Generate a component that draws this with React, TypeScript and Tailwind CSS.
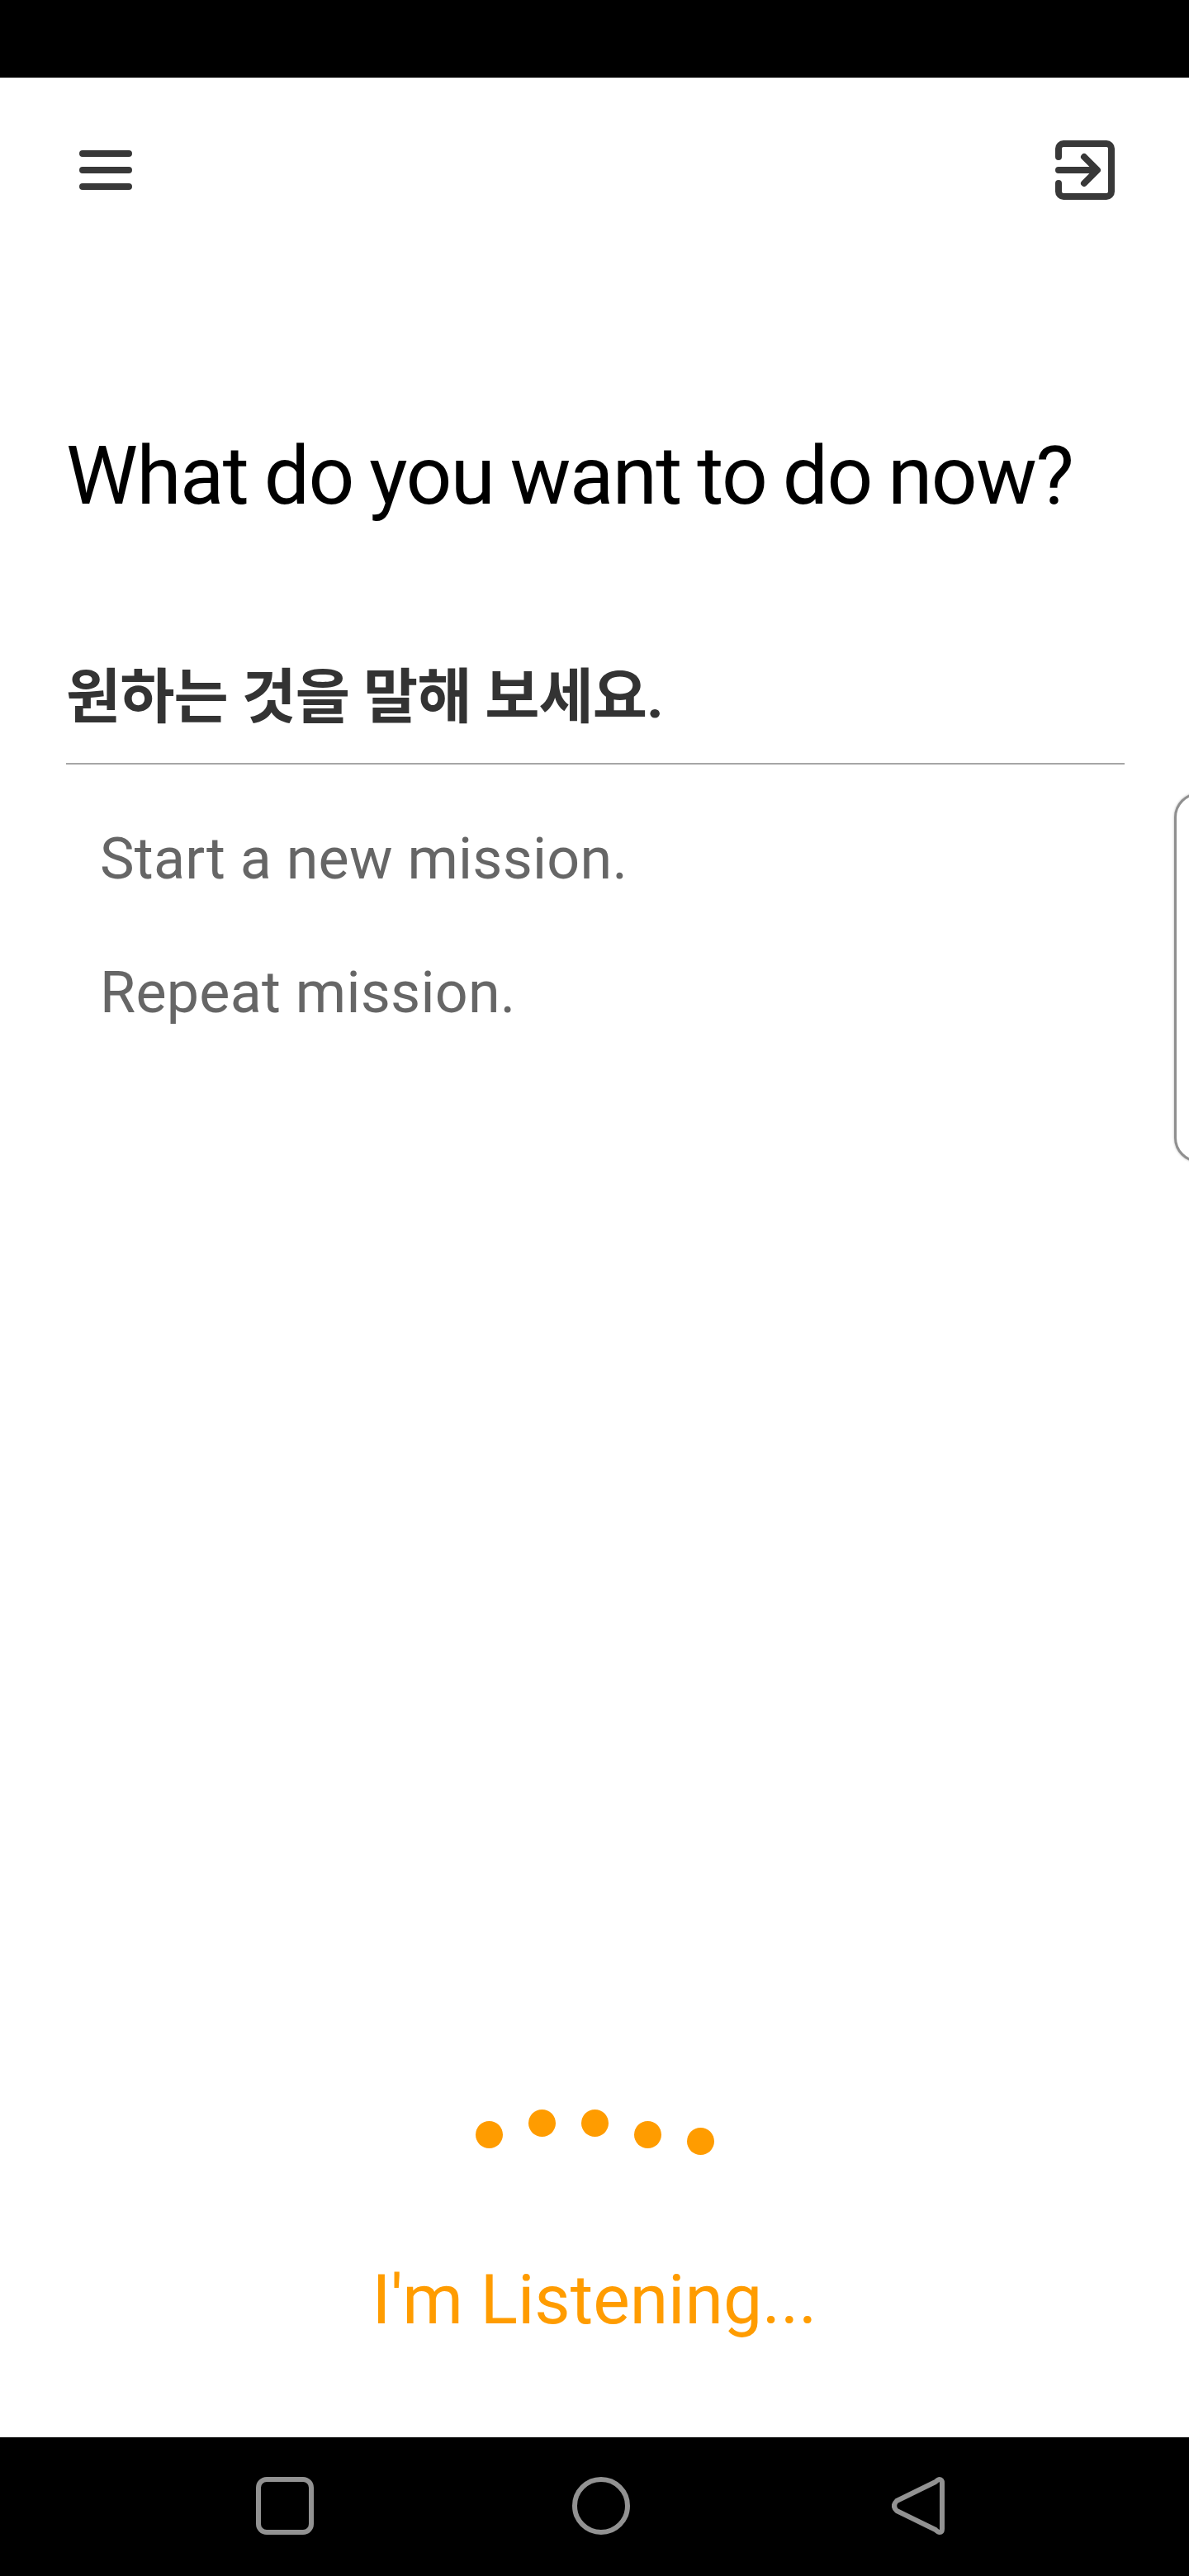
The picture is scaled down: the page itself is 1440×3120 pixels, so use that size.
const roboto = { fontFamily: 'Roboto, "Noto Sans CJK KR", sans-serif' };

export default function App() {
  return (
    <div className="relative flex h-[3120px] w-[1440px] flex-col overflow-hidden bg-white" style={roboto}>
      <div className="h-[94px] shrink-0 bg-black" />
      <main className="flex flex-1 flex-col">
        <header className="flex h-[224px] items-start justify-between pl-[96px] pr-[90px] pt-[76px]">
          <svg width="64" height="48" viewBox="0 0 64 48" className="mt-[12px]">
            <path d="M4 4H60M4 24H60M4 44H60" stroke="#383838" strokeWidth="8" strokeLinecap="round" fill="none" />
          </svg>
          <svg width="72" height="72" viewBox="0 0 72 72">
            <path d="M4 20V10a6 6 0 0 1 6-6h52a6 6 0 0 1 6 6v52a6 6 0 0 1-6 6H10a6 6 0 0 1-6-6V52" stroke="#383838" strokeWidth="8" strokeLinecap="round" fill="none" />
            <path d="M4 36H50M35 20l16 16-16 16" stroke="#383838" strokeWidth="8" strokeLinecap="round" strokeLinejoin="round" fill="none" />
          </svg>
        </header>
        <h1 className="ml-[80px] mt-[205px] text-[98px] font-normal leading-[108px] tracking-[-1.5px] text-black [word-spacing:-3.4px]">What do you want to do now?</h1>
        <div className="ml-[80px] mt-[172px] w-[1282px] border-b-2 border-[#a6a6a6] pb-[37px]">
          <p className="text-[72px] font-bold leading-[84px] tracking-[-1px] text-[#333333]">원하는 것을 말해 보세요.</p>
        </div>
        <ul className="ml-[121px] mt-[68px] flex flex-col gap-[70px] text-[70px] leading-[92px] tracking-[0.25px] text-[#666666]">
          <li>Start a new mission.</li>
          <li>Repeat mission.</li>
        </ul>
        <div className="mt-auto flex flex-col items-center pb-[116px]">
          <div className="flex items-start gap-[31px]">
            <span className="mt-[14px] size-[33px] rounded-full bg-[#ff9c00]" />
            <span className="size-[33px] rounded-full bg-[#ff9c00]" />
            <span className="size-[33px] rounded-full bg-[#ff9c00]" />
            <span className="mt-[14px] size-[33px] rounded-full bg-[#ff9c00]" />
            <span className="mt-[22px] size-[33px] rounded-full bg-[#ff9c00]" />
          </div>
          <p className="mt-[126px] text-[84px] leading-[100px] text-[#ff9c00]">I'm Listening...</p>
        </div>
      </main>
      <nav className="flex h-[168px] shrink-0 items-start bg-black pl-[310px] pt-[48px]">
        <svg width="70" height="70" viewBox="0 0 70 70">
          <rect x="3" y="3" width="64" height="64" rx="10" stroke="#929292" strokeWidth="6" fill="none" />
        </svg>
        <svg width="72" height="72" viewBox="0 0 72 72" className="ml-[312px]">
          <circle cx="36" cy="35" r="32" stroke="#929292" strokeWidth="6" fill="none" />
        </svg>
        <svg width="64" height="70" viewBox="0 0 64 70" className="ml-[316px]">
          <path d="M58 3c2 0 3 2 3 4v56c0 3-1 4-3 4s-3-1-5-3L6 41c-4-4-4-8 0-12L53 6c2-2 3-3 5-3z" stroke="#929292" strokeWidth="6" strokeLinejoin="round" fill="none" />
        </svg>
      </nav>
      <div className="absolute left-[1422px] top-[960px] h-[448px] w-[60px] rounded-[44px] border-[3px] border-[#8f8f8f] bg-white shadow-[0_0_3px_rgba(0,0,0,0.3)]" />
    </div>
  );
}
